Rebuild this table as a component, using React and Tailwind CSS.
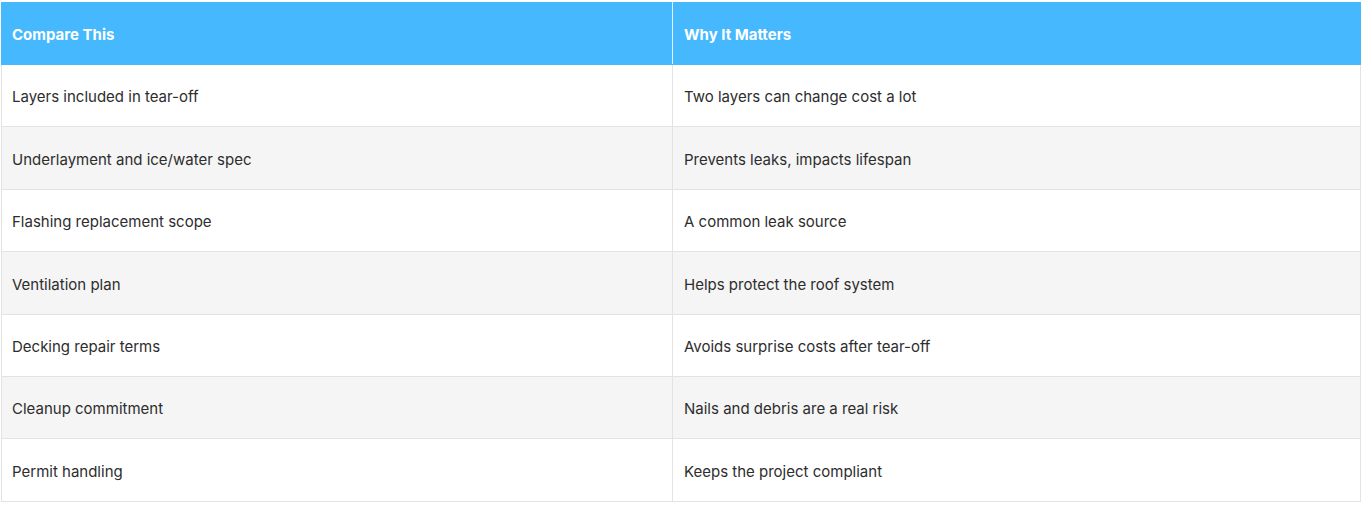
export default function App() {
  const rows = [
    ["Layers included in tear-off", "Two layers can change cost a lot"],
    ["Underlayment and ice/water spec", "Prevents leaks, impacts lifespan"],
    ["Flashing replacement scope", "A common leak source"],
    ["Ventilation plan", "Helps protect the roof system"],
    ["Decking repair terms", "Avoids surprise costs after tear-off"],
    ["Cleanup commitment", "Nails and debris are a real risk"],
    ["Permit handling", "Keeps the project compliant"],
  ];
  return (
    <div className="bg-white w-[1364px] h-[507px] pt-[2px] pl-[1px]" style={{ fontFamily: "Inter, 'Noto Sans', sans-serif" }}>
      <table className="w-[1360px] border-collapse table-fixed">
        <thead>
          <tr className="bg-[#45b8fe]">
            <th className="w-[671px] h-[62px] text-left font-bold text-white text-[15px] pl-[10px] pt-[3px] border border-[#45b8fe] border-r-[#dff2ff]">Compare This</th>
            <th className="h-[62px] text-left font-bold text-white text-[15px] pl-[11px] pt-[3px] border border-[#45b8fe]">Why It Matters</th>
          </tr>
        </thead>
        <tbody>
          {rows.map((r, i) => (
            <tr key={i} className={i % 2 === 1 ? "bg-[#f5f5f5]" : "bg-white"}>
              <td className="h-[62.4px] text-[15px] text-[#2d2d2d] pl-[10px] pt-[4px] border border-[#e3e3e3]">{r[0]}</td>
              <td className="h-[62.4px] text-[15px] text-[#2d2d2d] pl-[11px] pt-[4px] border border-[#e3e3e3]">{r[1]}</td>
            </tr>
          ))}
        </tbody>
      </table>
    </div>
  );
}
